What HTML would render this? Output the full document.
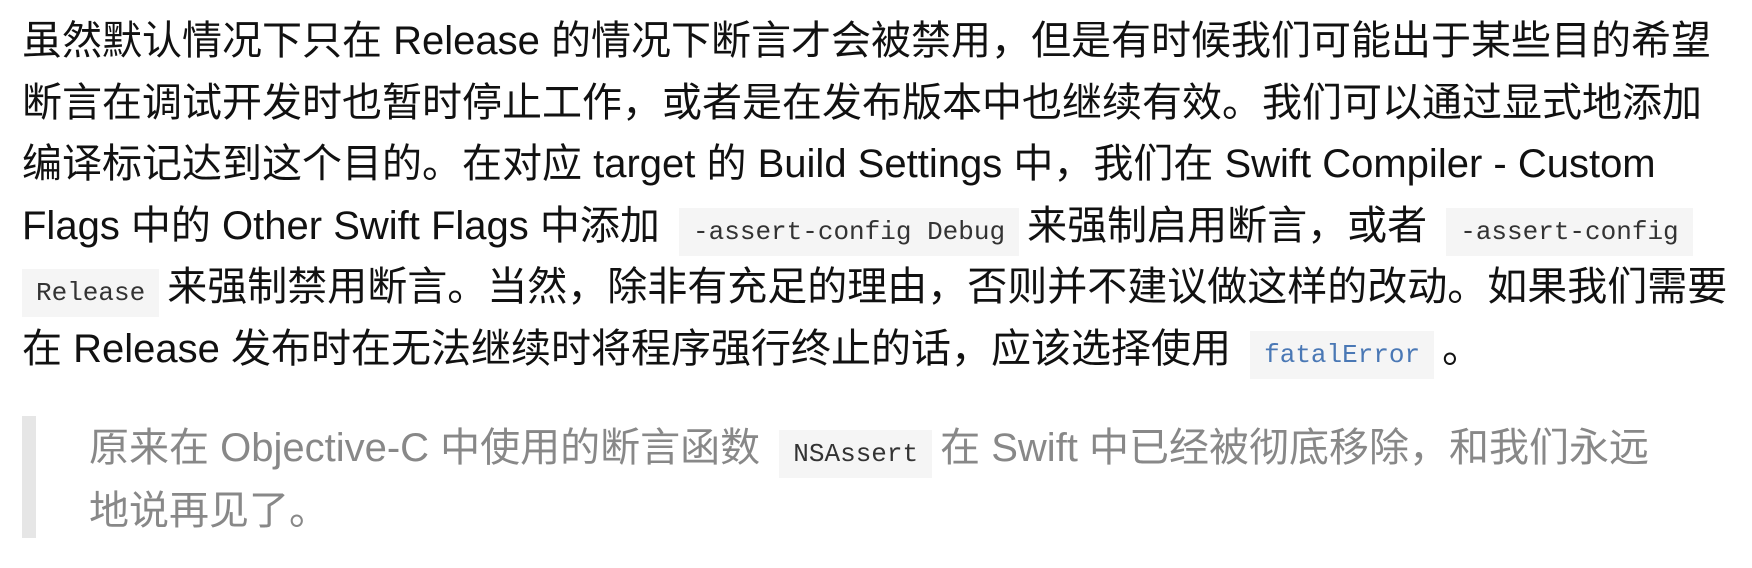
<!DOCTYPE html>
<html><head><meta charset="utf-8"><style>
body{margin:0;background:#fff;width:1752px;height:568px;overflow:hidden;font-family:"Liberation Sans","Noto Sans CJK SC",sans-serif;}
p{margin:0;position:absolute;left:22px;top:11px;font-size:40px;line-height:61.6px;color:#111;white-space:nowrap;}
code{font-family:"Liberation Mono","DejaVu Sans Mono",monospace;font-size:26px;line-height:1;background:#f5f5f5;padding:9px 14px;margin:0 8px;color:#333;}
code.b{color:#4a78b5;}
.bq{position:absolute;left:22px;top:416px;width:14px;height:122px;background:#e6e6e6;}
.q{left:89px;top:417px;color:#888;line-height:63px;}
</style></head><body>
<p>虽然默认情况下只在 Release 的情况下断言才会被禁用，但是有时候我们可能出于某些目的希望<br>断言在调试开发时也暂时停止工作，或者是在发布版本中也继续有效。我们可以通过显式地添加<br>编译标记达到这个目的。在对应 target 的 Build Settings 中，我们在 Swift Compiler - Custom<br>Flags 中的 Other Swift Flags 中添加 <code>-assert-config Debug</code>来强制启用断言，或者 <code>-assert-config</code><br><code style="margin-left:0">Release</code>来强制禁用断言。当然，除非有充足的理由，否则并不建议做这样的改动。如果我们需要<br>在 Release 发布时在无法继续时将程序强行终止的话，应该选择使用 <code class="b">fatalError</code>。</p>
<div class="bq"></div>
<p class="q">原来在 Objective-C 中使用的断言函数 <code>NSAssert</code>在 Swift 中已经被彻底移除，和我们永远<br>地说再见了。</p>
</body></html>
